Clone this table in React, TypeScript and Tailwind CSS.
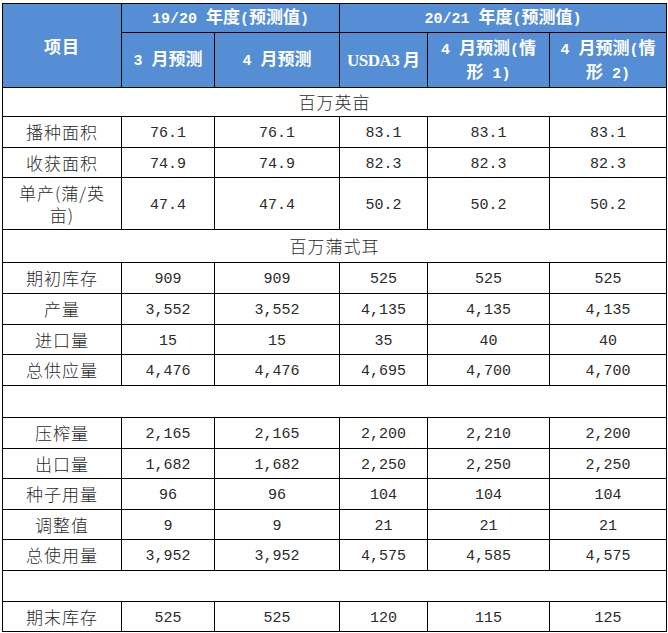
const cjk = '[font-family:"Noto_Sans_CJK_SC",sans-serif]';

type Row =
  | { kind: 'data'; label: React.ReactNode; values: string[]; h: string }
  | { kind: 'section'; text: string; h: string };

const rows: Row[] = [
  { kind: 'section', text: '百万英亩', h: 'h-[29px]' },
  { kind: 'data', label: '播种面积', values: ['76.1', '76.1', '83.1', '83.1', '83.1'], h: 'h-[31px]' },
  { kind: 'data', label: '收获面积', values: ['74.9', '74.9', '82.3', '82.3', '82.3'], h: 'h-[30px]' },
  {
    kind: 'data',
    label: (
      <span className="block leading-[22px]">
        <span className="block">单产(蒲/英</span>
        <span className="block">亩)</span>
      </span>
    ),
    values: ['47.4', '47.4', '50.2', '50.2', '50.2'],
    h: 'h-[52px]',
  },
  { kind: 'section', text: '百万蒲式耳', h: 'h-[33px]' },
  { kind: 'data', label: '期初库存', values: ['909', '909', '525', '525', '525'], h: 'h-[31px]' },
  { kind: 'data', label: '产量', values: ['3,552', '3,552', '4,135', '4,135', '4,135'], h: 'h-[31px]' },
  { kind: 'data', label: '进口量', values: ['15', '15', '35', '40', '40'], h: 'h-[30px]' },
  { kind: 'data', label: '总供应量', values: ['4,476', '4,476', '4,695', '4,700', '4,700'], h: 'h-[31px]' },
  { kind: 'section', text: '', h: 'h-[32px]' },
  { kind: 'data', label: '压榨量', values: ['2,165', '2,165', '2,200', '2,210', '2,200'], h: 'h-[31px]' },
  { kind: 'data', label: '出口量', values: ['1,682', '1,682', '2,250', '2,250', '2,250'], h: 'h-[30px]' },
  { kind: 'data', label: '种子用量', values: ['96', '96', '104', '104', '104'], h: 'h-[31px]' },
  { kind: 'data', label: '调整值', values: ['9', '9', '21', '21', '21'], h: 'h-[30px]' },
  { kind: 'data', label: '总使用量', values: ['3,952', '3,952', '4,575', '4,585', '4,575'], h: 'h-[31px]' },
  { kind: 'section', text: '', h: 'h-[31px]' },
  { kind: 'data', label: '期末库存', values: ['525', '525', '120', '115', '125'], h: 'h-[30px]' },
];

function Num({ children }: { children: React.ReactNode }) {
  return <span className='[font-family:"Liberation_Mono",monospace] text-[15px]'>{children}</span>;
}

export default function App() {
  const th = 'border border-black bg-[#558ed5] text-white font-bold p-0 text-center align-middle';
  const td = 'border border-black p-0 text-center align-middle text-[#2a2a2a]';
  return (
    <div className="w-[668px] h-[633px] bg-white pt-[3px] pl-[2px] overflow-hidden">
      <table className={`table-fixed border-collapse w-[664px] ${cjk} text-[17px] leading-[22px]`}>
        <colgroup>
          <col className="w-[119px]" />
          <col className="w-[93px]" />
          <col className="w-[125px]" />
          <col className="w-[88px]" />
          <col className="w-[122px]" />
          <col className="w-[117px]" />
        </colgroup>
        <thead>
          <tr className="h-[29px]">
            <th rowSpan={2} className={`${th} tracking-[1px]`}>项目</th>
            <th colSpan={2} className={th}>
              <Num>19/20 </Num>年度<Num>(</Num>预测值<Num>)</Num>
            </th>
            <th colSpan={3} className={th}>
              <Num>20/21 </Num>年度<Num>(</Num>预测值<Num>)</Num>
            </th>
          </tr>
          <tr className="h-[55px]">
            <th className={th}>
              <Num>3 </Num>月预测
            </th>
            <th className={th}>
              <Num>4 </Num>月预测
            </th>
            <th className={th}>
              <span className='[font-family:"Liberation_Serif",serif] text-[17px] tracking-[-0.5px]'>USDA3 </span>月
            </th>
            <th className={th}>
              <span className="block h-[24px]">
                <Num>4 </Num>月预测<Num>(</Num>情
              </span>
              <span className="block h-[24px]">
                形<Num> 1)</Num>
              </span>
            </th>
            <th className={th}>
              <span className="block h-[24px]">
                <Num>4 </Num>月预测<Num>(</Num>情
              </span>
              <span className="block h-[24px]">
                形<Num> 2)</Num>
              </span>
            </th>
          </tr>
        </thead>
        <tbody>
          {rows.map((r, i) =>
            r.kind === 'section' ? (
              <tr key={i} className={r.h}>
                <td colSpan={6} className={`${td} font-light tracking-[1px]`}>
                  {r.text}
                </td>
              </tr>
            ) : (
              <tr key={i} className={r.h}>
                <td className={`${td} font-light tracking-[1px]`}>{r.label}</td>
                {r.values.map((v, j) => (
                  <td key={j} className={td}>
                    <Num>{v}</Num>
                  </td>
                ))}
              </tr>
            ),
          )}
        </tbody>
      </table>
    </div>
  );
}
